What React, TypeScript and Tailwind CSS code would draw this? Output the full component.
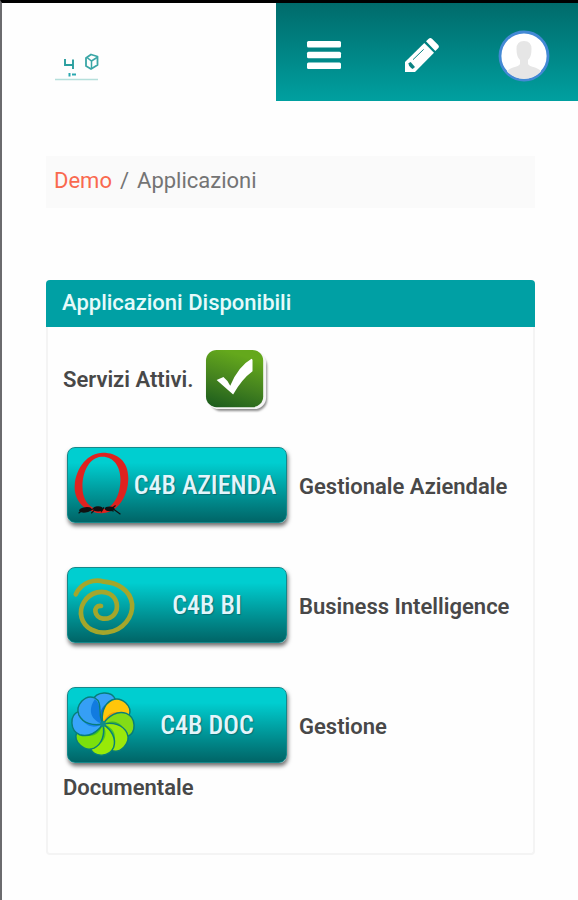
import type { ReactNode } from "react"

type Service = {
	label: string
	description: string[]
	icon: ReactNode
}

const BrandLogo = () => (
	<svg viewBox="0 0 48 32" className="h-8 w-12" fill="none" aria-hidden="true">
		<path d="M11 7v6h8M19 7.500v9.500" stroke="#2a9f9f" strokeWidth="1.900" />
		<path d="M32 6l5-3.500 6.500 2v8.500l-6.500 4-5-3z" stroke="#3aa6a6" strokeWidth="1.800" strokeLinejoin="round" />
		<path d="M33 5.500l4.500 3.500L43 5.500M37.500 9v8" stroke="#3aa6a6" strokeWidth="1.500" />
		<path d="M15.500 21v3.500M18 22.500h4" stroke="#2aa8b0" strokeWidth="2" />
		<path d="M1 27.500h43" stroke="#b5dfdb" strokeWidth="1.500" />
	</svg>
)

const MenuIcon = () => (
	<svg viewBox="0 0 36 36" className="size-9" fill="#fff" aria-hidden="true">
		<rect x="1" y="3" width="34" height="6.500" rx="1.500" />
		<rect x="1" y="13.700" width="34" height="6.500" rx="1.500" />
		<rect x="1" y="24.500" width="34" height="6.500" rx="1.500" />
	</svg>
)

const PencilIcon = () => (
	<svg viewBox="0 0 108 108" className="size-9" aria-hidden="true">
		<path d="M3 102V72L61 15 90 44 33 102z" fill="#fff" />
		<path d="M66 10l8-8q5-4 10 0l18 18q5 5 1 10l-9 9z" fill="#fff" />
		<path d="M27 65L59 34" stroke="#0b8383" strokeWidth="3" />
		<path d="M13 76l7-4 13 15-7 6q-10-4-13-17z" fill="#0b8383" />
	</svg>
)

const Avatar = () => (
	<svg viewBox="0 0 52 52" className="size-13" aria-hidden="true">
		<defs>
			<clipPath id="avatar-clip">
				<circle cx="26" cy="26" r="23" />
			</clipPath>
		</defs>
		<circle cx="26" cy="26" r="24" fill="#fff" stroke="#4389d5" strokeWidth="2.800" />
		<g clipPath="url(#avatar-clip)" fill="#e6e6e6">
			<path d="M18.500 19q0-8 7.500-8t7.500 8q0 8-3.500 11v4q1 2 7 3.500 6 2 7 6v9H8v-9q1-4 7-6 6-1.500 7-3.500v-4q-3.500-3-3.500-11z" />
		</g>
	</svg>
)

const ActiveBadge = () => (
	<svg viewBox="0 0 66 66" className="ml-1.5 inline-block h-16 w-16 align-middle" role="img" aria-label="Attivi">
		<defs>
			<linearGradient id="badge-fill" x1="0.3" y1="0" x2="0" y2="1">
				<stop offset="0" stopColor="#64a81c" />
				<stop offset="0.5" stopColor="#43811f" />
				<stop offset="1" stopColor="#195a1d" />
			</linearGradient>
			<filter id="badge-shadow" x="-20%" y="-20%" width="140%" height="140%">
				<feGaussianBlur stdDeviation="1.200" />
			</filter>
		</defs>
		<rect x="5" y="6" width="59" height="58" rx="12" fill="#8b8b8b" filter="url(#badge-shadow)" />
		<rect x="2" y="2" width="61" height="60" rx="12" fill="#f5f5f5" />
		<rect x="1" y="1" width="59" height="59" rx="11" fill="url(#badge-fill)" />
		<path d="M12 32l7-3q4 3 7 9Q34 18 48 10l1 1v12Q38 31 29 47z" fill="#fff" />
	</svg>
)

const AziendaIcon = () => (
	<svg viewBox="0 0 64 76" className="h-full w-16 shrink-0" aria-hidden="true">
		<path
			d="M35 5C50 5 62 14 61 33 60 52 49 66 34 67 17 67 5 54 6 39 7 20 20 5 35 5zM33 9C22 10 14 23 14 40c0 15 9 24 20 23 12-1 19-15 19-31 0-14-8-24-20-23z"
			fill="#df221f"
			fillRule="evenodd"
		/>
		<g fill="#111">
			<ellipse cx="17" cy="63.500" rx="6.500" ry="2.800" transform="rotate(-8 17 63.500)" />
			<ellipse cx="30" cy="62.500" rx="5" ry="2.800" />
			<ellipse cx="42" cy="62.500" rx="5" ry="2.500" />
		</g>
		<path d="M14 64l-4 3M22 64l6-3 6 4M26 64l-3 3M36 61l-3 5M38 62l8 3M46 63l7 5M44 62l4-3" stroke="#111" strokeWidth="1.200" fill="none" />
	</svg>
)

const SpiralIcon = () => (
	<svg viewBox="0 0 70 76" className="h-full w-17 shrink-0" fill="none" aria-hidden="true">
		<path
			d="M34 39C25 38 27 51 36 52 46 53 52 45 50 36 48 27 39 23 30 25 18 28 11 40 14 51 17 62 29 68 41 66 57 64 67 50 66 37 64 22 50 15 37 14 28 11 14 14 8 27"
			stroke="#a4a62b"
			strokeWidth="4.800"
			strokeLinecap="round"
			strokeLinejoin="round"
		/>
	</svg>
)

const petals = [
	{ angle: 0, fill: "#38a2f8", shade: "#126fd6" },
	{ angle: 45, fill: "#ffc60a", shade: "#f49a0b" },
	{ angle: 90, fill: "#83dc16", shade: "#3fb32c" },
	{ angle: 135, fill: "#9be80c", shade: "#45c42d" },
	{ angle: 180, fill: "#98ea08", shade: "#50c91e" },
	{ angle: 225, fill: "#7be00c", shade: "#42c51e" },
	{ angle: 270, fill: "#38a4fa", shade: "#1683ea" },
	{ angle: 315, fill: "#369ff5", shade: "#117be0" },
]

const PetalsIcon = () => (
	<svg viewBox="0 0 70 76" className="h-full w-17 shrink-0" aria-hidden="true">
		{petals.map(({ angle, fill, shade }) => (
			<g key={angle} transform={`rotate(${angle} 36 37)`}>
				<path d="M36 37C27 31 22 22 25 13 29 3 45 2 49 12 52 22 39 25 36 37z" fill={fill} />
				<path d="M36 37C30 26 34 16 48 13 50 22 39 25 36 37z" fill={shade} />
				<path d="M36 37C27 31 22 22 25 13 29 3 45 2 49 12 52 22 39 25 36 37z" fill="none" stroke="#087d79" strokeWidth="1.500" />
			</g>
		))}
		<circle cx="36" cy="37" r="3" fill="#108c87" />
	</svg>
)

const services: Service[] = [
	{ label: "C4B AZIENDA", description: ["Gestionale", "Aziendale"], icon: <AziendaIcon /> },
	{ label: "C4B BI", description: ["Business", "Intelligence"], icon: <SpiralIcon /> },
	{ label: "C4B DOC", description: ["Gestione", "Documentale"], icon: <PetalsIcon /> },
]

const ServiceRow = ({ label, description, icon }: Service) => (
	<p className="mb-[30px]">
		<button
			type="button"
			className="mt-1 mr-3 mb-[10px] ml-1 inline-flex h-[76px] w-[220px] items-center rounded-lg border border-[#16888a] bg-linear-to-b from-[#00ced0] from-20% to-[#006567] pr-2 align-middle shadow-[1px_3px_4px_#00000090]"
		>
			{icon}
			<span className="flex-1 text-center font-['Roboto_Condensed','Liberation_Sans_Narrow',sans-serif] text-[26px] leading-8 font-medium whitespace-nowrap text-[#e2f5fb] text-shadow-[1px_1px_1px_#087176]">
				{label}
			</span>
		</button>
		<span>{description[0]}</span> <span>{description[1]}</span>
	</p>
)

const Header = () => (
	<header className="flex h-[98px] items-stretch">
		<a href="#home" aria-label="Home" className="flex flex-1 items-center pt-8 pl-[52px]">
			<BrandLogo />
		</a>
		<nav className="flex w-[302px] items-center justify-between bg-linear-to-b from-[#006b6b] to-[#00a0a0] pt-2 pr-7 pl-[30px]">
			<button type="button" aria-label="Menu">
				<MenuIcon />
			</button>
			<button type="button" aria-label="Modifica" className="pl-1">
				<PencilIcon />
			</button>
			<button type="button" aria-label="Profilo">
				<Avatar />
			</button>
		</nav>
	</header>
)

const App = () => (
	<div className="min-h-screen border-t-3 border-l-2 border-t-black border-l-[#6b6b6e] bg-[#fefefe] font-[Roboto,sans-serif] text-[22px] leading-[30px]">
		<Header />
		<main className="pt-[55px] pr-[43px] pl-11">
			<nav aria-label="Breadcrumb" className="bg-[#fafafa] px-2 pt-[10px] pb-3 text-[#747474]">
				<ol className="flex gap-2">
					<li>
						<a href="#demo" className="text-[#f9694f]">
							Demo
						</a>
					</li>
					<li aria-hidden="true">/</li>
					<li aria-current="page">Applicazioni</li>
				</ol>
			</nav>

			<section className="mt-[72px] rounded border-2 border-t-0 border-[#f4f4f4]">
				<h1 className="-mx-[2px] rounded-t bg-[#00a0a4] px-4 pt-2 pb-[9px] font-medium text-[#e6fafa]">Applicazioni Disponibili</h1>
				<div className="px-[15px] pt-[22px] pb-5 font-semibold text-[#484848]">
					<p className="mb-[30px]">
						Servizi Attivi. <ActiveBadge />
					</p>
					{services.map((service) => (
						<ServiceRow key={service.label} {...service} />
					))}
				</div>
			</section>
		</main>
	</div>
)

export default App
